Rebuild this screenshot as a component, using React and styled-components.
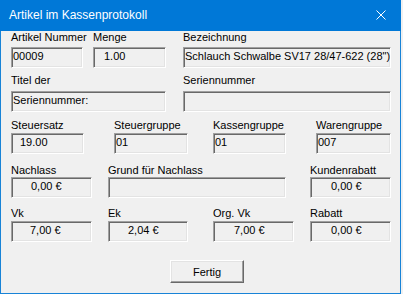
import { createGlobalStyle } from 'styled-components';
import styled from 'styled-components';

const Global = createGlobalStyle`
  html, body {
    margin: 0;
    padding: 0;
    background: #f0f0f0;
  }
  body {
    font-family: "Liberation Sans", Arial, sans-serif;
    font-size: 11px;
    color: #000;
  }
`;

const Dialog = styled.div`
  width: 401px;
  height: 294px;
  box-sizing: border-box;
  border: 1px solid #1883d7;
  border-top: none;
  background: #f0f0f0;
  display: flex;
  flex-direction: column;
`;

const TitleBar = styled.div`
  height: 31px;
  margin: 0 -1px;
  background: #0078d7;
  color: #fff;
  font-size: 12px;
  display: flex;
  align-items: center;
  justify-content: space-between;
  padding: 0 9px 1px 9px;
  box-sizing: border-box;
`;

const CloseBtn = styled.div`
  width: 10px;
  height: 10px;
  margin-right: 6px;
  display: flex;
`;

const Body = styled.div`
  padding-left: 10px;
  display: flex;
  flex-direction: column;
`;

const Row = styled.div`
  display: flex;
  margin-top: ${(p) => p.$mt || 0}px;
`;

const Cell = styled.div`
  width: ${(p) => p.$w}px;
  margin-left: ${(p) => p.$ml || 0}px;
  display: flex;
  flex-direction: column;
`;

const Label = styled.div`
  height: 13px;
  line-height: 13px;
  white-space: nowrap;
  margin-bottom: ${(p) => p.$gap || 0}px;
`;

const Box = styled.div`
  height: 21px;
  box-sizing: border-box;
  border-top: 1px solid #a0a0a0;
  border-left: 1px solid #a0a0a0;
  border-bottom: 1px solid #ffffff;
  border-right: 1px solid #ffffff;
  box-shadow: inset 1px 1px 0 #696969, inset -1px -1px 0 #e3e3e3;
  background: #f0f0f0;
  padding: 1px 0 0 ${(p) => p.$indent ?? 1}px;
  line-height: 14px;
  white-space: nowrap;
  overflow: hidden;
`;

const ButtonRow = styled.div`
  display: flex;
  margin-top: 18px;
  padding-left: 159px;
`;

const Button = styled.button`
  width: 74px;
  height: 23px;
  box-sizing: border-box;
  font-family: "Liberation Sans", Arial, sans-serif;
  font-size: 11px;
  color: #000;
  background: #f0f0f0;
  border-top: 1px solid #ffffff;
  border-left: 1px solid #ffffff;
  border-bottom: 1px solid #696969;
  border-right: 1px solid #696969;
  box-shadow: inset -1px -1px 0 #a0a0a0, inset 1px 1px 0 #e3e3e3;
  padding: 0;
`;

const Field = ({ label, value, w, ml, gap, indent }) => (
  <Cell $w={w} $ml={ml}>
    <Label $gap={gap}>{label}</Label>
    <Box $indent={indent}>{value}</Box>
  </Cell>
);

export default function App() {
  return (
    <>
      <Global />
      <Dialog>
        <TitleBar>
          <span>Artikel im Kassenprotokoll</span>
          <CloseBtn>
            <svg width="10" height="10" viewBox="0 0 10 10">
              <path d="M0.5 0.5 L9.5 9.5 M9.5 0.5 L0.5 9.5" stroke="#fff" strokeWidth="1" fill="none" />
            </svg>
          </CloseBtn>
        </TitleBar>
        <Body>
          <Row>
            <Field label="Artikel Nummer" value="00009" w={72} gap={3} />
            <Field label="Menge" value="1.00" w={73} ml={10} gap={3} indent={10} />
            <Field label="Bezeichnung" value={'Schlauch Schwalbe SV17 28/47-622 (28")'} w={208} ml={17} gap={3} />
          </Row>
          <Row $mt={6}>
            <Field label="Titel der" value="Seriennummer:" w={155} gap={4} />
            <Field label="Seriennummer" value="" w={208} ml={17} gap={4} />
          </Row>
          <Row $mt={7}>
            <Field label="Steuersatz" value="19.00" w={73} gap={1} indent={8} />
            <Field label="Steuergruppe" value="01" w={74} ml={30} gap={1} />
            <Field label="Kassengruppe" value="01" w={73} ml={25} gap={1} />
            <Field label="Warengruppe" value="007" w={75} ml={30} gap={1} />
          </Row>
          <Row $mt={10}>
            <Field label="Nachlass" value="0,00 €" w={81} gap={0} indent={19} />
            <Field label="Grund für Nachlass" value="" w={178} ml={16} gap={0} />
            <Field label="Kundenrabatt" value="0,00 €" w={81} ml={24} gap={0} indent={20} />
          </Row>
          <Row $mt={9}>
            <Field label="Vk" value="7,00 €" w={81} gap={1} indent={18} />
            <Field label="Ek" value="2,04 €" w={80} ml={16} gap={1} indent={19} />
            <Field label="Org. Vk" value="7,00 €" w={81} ml={25} gap={1} indent={20} />
            <Field label="Rabatt" value="0,00 €" w={81} ml={16} gap={1} indent={20} />
          </Row>
          <ButtonRow>
            <Button>Fertig</Button>
          </ButtonRow>
        </Body>
      </Dialog>
    </>
  );
}
